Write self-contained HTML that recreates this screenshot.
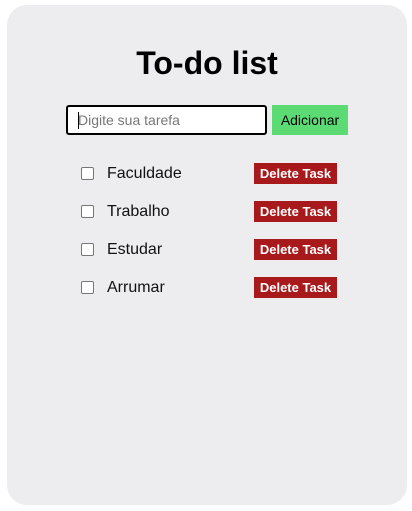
<!DOCTYPE html>
<html><head><style>
body{margin:0;background:#fff;font-family:"Liberation Sans",sans-serif;width:412px;height:511px;position:relative;overflow:hidden}
.card{position:absolute;left:7px;top:5px;width:400px;height:500px;background:#edecee;border-radius:20px}
h1{position:absolute;left:0;width:414px;top:45px;margin:0;text-align:center;font-size:32px;font-weight:bold;line-height:37px}
.inp{position:absolute;left:66px;top:105px;width:197px;height:26px;border:2px solid #000;border-radius:3px;background:#fff}
.inp span{position:absolute;left:10px;top:5px;font-size:14px;color:#777}
.inp i{position:absolute;left:10px;top:5px;width:1px;height:17px;background:#000}
.add{position:absolute;left:272px;top:105px;width:76px;height:30px;background:#5cdb74;font-size:14px;line-height:30px;text-align:center}
.row{position:absolute;left:0;width:412px;height:22px}
.cb{position:absolute;left:81px;top:4px;width:11px;height:11px;border:1px solid #767676;border-radius:2px;background:#fff}
.t{position:absolute;left:107px;top:2px;font-size:16px;color:#111}
.del{position:absolute;left:254px;top:0;width:83px;height:21px;background:#a8191b;color:#fff;font-weight:bold;font-size:13px;line-height:21px;text-align:center}
</style></head><body>
<div class="card"></div>
<h1>To-do list</h1>
<div class="inp"><i></i><span>Digite sua tarefa</span></div>
<div class="add">Adicionar</div>
<div class="row" style="top:163px"><div class="cb"></div><div class="t">Faculdade</div><div class="del">Delete Task</div></div>
<div class="row" style="top:201px"><div class="cb"></div><div class="t">Trabalho</div><div class="del">Delete Task</div></div>
<div class="row" style="top:239px"><div class="cb"></div><div class="t">Estudar</div><div class="del">Delete Task</div></div>
<div class="row" style="top:277px"><div class="cb"></div><div class="t">Arrumar</div><div class="del">Delete Task</div></div>
</body></html>
